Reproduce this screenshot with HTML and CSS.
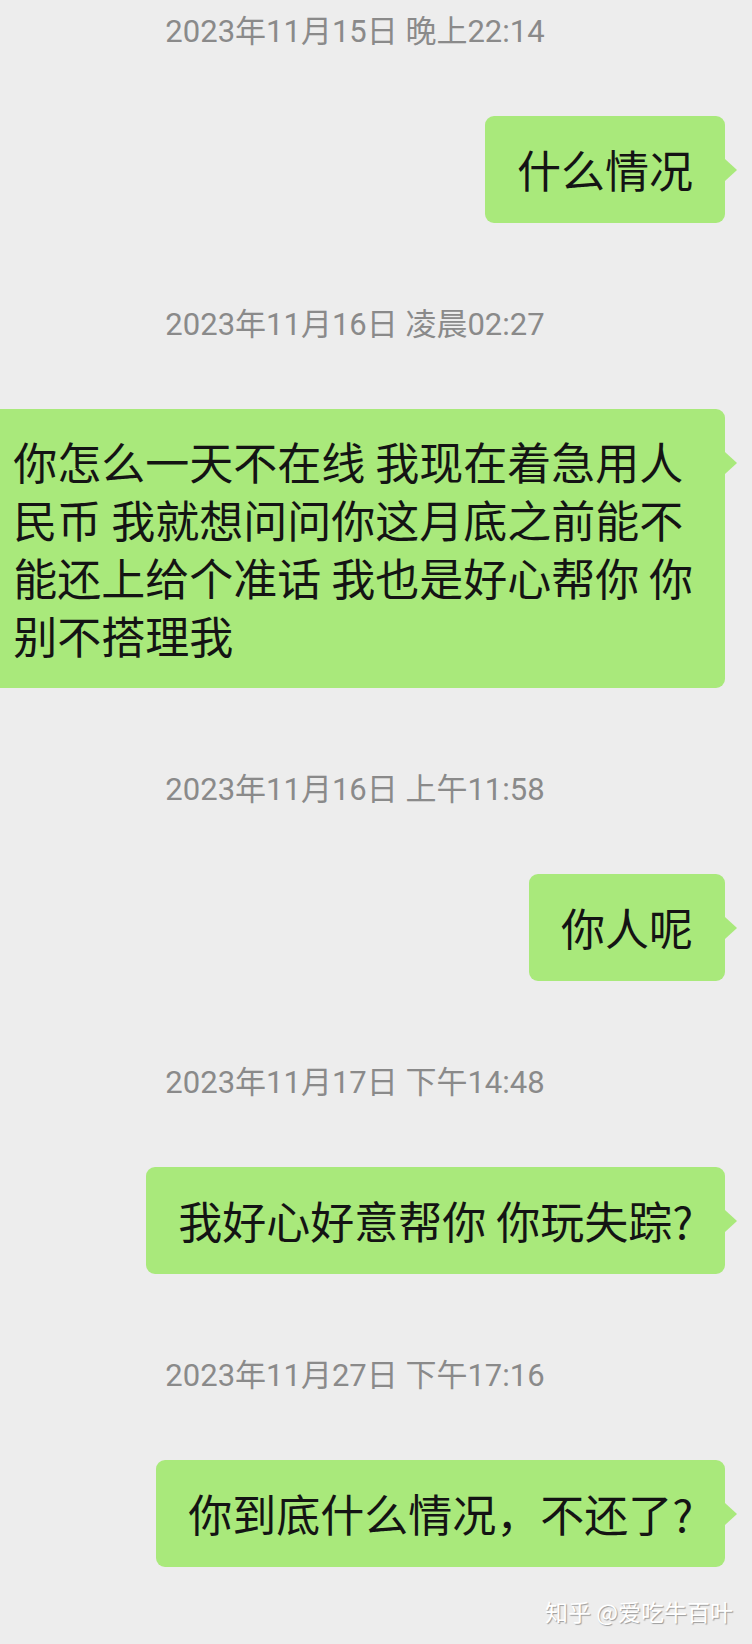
FILE: index.html
```html
<!DOCTYPE html>
<html lang="zh-CN">
<head>
    <meta charset="UTF-8">
    <meta name="viewport" content="width=device-width, initial-scale=1.0">
    <title>聊天记录</title>
    <link rel="stylesheet" href="styles.css">
</head>
<body>
    <div class="chat">
        <div class="time">2023年11月15日 晚上22:14</div>
        <div class="row">
            <div class="bubble">什么情况</div>
        </div>

        <div class="time">2023年11月16日 凌晨02:27</div>
        <div class="row">
            <div class="bubble long">你怎么一天不在线 我现在着急用人<br>民币 我就想问问你这月底之前能不<br>能还上给个准话 我也是好心帮你 你<br>别不搭理我</div>
        </div>

        <div class="time">2023年11月16日 上午11:58</div>
        <div class="row">
            <div class="bubble">你人呢</div>
        </div>

        <div class="time">2023年11月17日 下午14:48</div>
        <div class="row">
            <div class="bubble">我好心好意帮你 你玩失踪?</div>
        </div>

        <div class="time">2023年11月27日 下午17:16</div>
        <div class="row last">
            <div class="bubble">你到底什么情况，不还了?</div>
        </div>

        <div class="watermark">知乎 @爱吃牛百叶</div>
    </div>
</body>
</html>
```

FILE: styles.css
```css
html {
    background-color: #ededed;
}
body {
    margin: 0;
    overflow: hidden;
    background-color: #ededed;
    font-family: "Noto Sans CJK SC", sans-serif;
}
.chat {
    padding-top: 12px;
    min-height: 1632px;
}
.time {
    height: 40px;
    line-height: 40px;
    padding-right: 42px;
    margin-bottom: 64px;
    text-align: center;
    font-family: Roboto, "Noto Sans CJK SC", sans-serif;
    font-size: 31px;
    color: #8a8a8a;
    white-space: nowrap;
}
.row {
    display: flex;
    justify-content: flex-end;
    padding-right: 27px;
    margin-bottom: 82px;
}
.row.last {
    margin-bottom: 29px;
}
.bubble {
    position: relative;
    padding: 24px 32px 25px;
    border-radius: 9px;
    background-color: #a9e97b;
    color: #141414;
    font-size: 44px;
    line-height: 58px;
    white-space: nowrap;
}
.bubble::after {
    content: "";
    position: absolute;
    top: 43px;
    right: -12px;
    border-top: 11px solid transparent;
    border-bottom: 11px solid transparent;
    border-left: 12px solid #a9e97b;
}
.bubble.long {
    padding: 23px 32px 24px;
}
.watermark {
    text-align: right;
    padding-right: 19px;
    font-size: 23px;
    line-height: 30px;
    color: #ffffff;
    text-shadow: 1px 1px 1px rgba(0, 0, 0, 0.35);
}
```
